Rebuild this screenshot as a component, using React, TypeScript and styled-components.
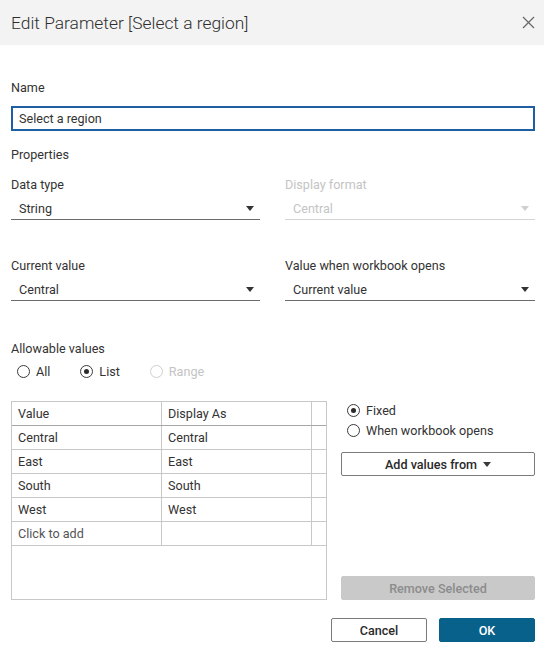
import React from "react";
import styled, { createGlobalStyle } from "styled-components";

const GlobalStyle = createGlobalStyle`
  html, body {
    margin: 0;
    padding: 0;
    background: #ffffff;
  }
  body {
    font-family: Roboto, "Liberation Sans", Arial, sans-serif;
    color: #333333;
  }
  * {
    box-sizing: border-box;
  }
`;

const Dialog = styled.div`
  width: 544px;
  height: 654px;
  display: flex;
  flex-direction: column;
  background: #ffffff;
`;

const Header = styled.div`
  height: 45px;
  flex: 0 0 45px;
  background: #f3f3f3;
  display: flex;
  align-items: center;
  justify-content: space-between;
  padding: 0 4px 0 11px;
`;

const Title = styled.h1`
  margin: 0;
  font-size: 17.4px;
  font-weight: 300;
  color: #2e2e2e;
`;

const CloseButton = styled.button`
  width: 24px;
  height: 24px;
  border: none;
  background: transparent;
  padding: 0;
  display: flex;
  align-items: center;
  justify-content: center;
  cursor: pointer;
`;

const Body = styled.div`
  flex: 1;
  display: flex;
  flex-direction: column;
  padding: 35px 9px 12px 11px;
`;

const Label = styled.div<{ $top?: number; $disabled?: boolean }>`
  font-size: 12.6px;
  line-height: 16px;
  height: 16px;
  margin-top: ${(p) => p.$top ?? 0}px;
  color: ${(p) => (p.$disabled ? "#c4c4c4" : "#333333")};
`;

const NameInput = styled.input`
  margin-top: 10px;
  height: 25px;
  width: 100%;
  border: 2px solid #1d5fa0;
  padding: 0 6px;
  font-family: inherit;
  font-size: 12.6px;
  color: #333333;
  outline: none;
`;

const Columns = styled.div<{ $top?: number }>`
  display: grid;
  grid-template-columns: 249px 250px;
  column-gap: 25px;
  margin-top: ${(p) => p.$top ?? 0}px;
`;

const Field = styled.div`
  display: flex;
  flex-direction: column;
`;

const Select = styled.div<{ $disabled?: boolean }>`
  margin-top: 4px;
  height: 23px;
  display: flex;
  align-items: center;
  justify-content: space-between;
  padding: 0 6px 0 8px;
  border-bottom: 1px solid ${(p) => (p.$disabled ? "#d4d4d4" : "#6b6b6b")};
  font-size: 12.6px;
  color: ${(p) => (p.$disabled ? "#c4c4c4" : "#333333")};
`;

const Caret = styled.span<{ $color?: string }>`
  width: 0;
  height: 0;
  border-left: 4px solid transparent;
  border-right: 4px solid transparent;
  border-top: 5px solid ${(p) => p.$color ?? "#333333"};
  display: inline-block;
`;

const RadioRow = styled.div`
  display: flex;
  align-items: center;
  gap: 30px;
  margin-top: 6px;
  padding-left: 6px;
`;

const RadioOption = styled.label<{ $disabled?: boolean }>`
  display: flex;
  align-items: center;
  gap: 6px;
  height: 16px;
  font-size: 12.6px;
  color: ${(p) => (p.$disabled ? "#c4c4c4" : "#333333")};
`;

const RadioCircle = styled.span<{ $checked?: boolean; $disabled?: boolean }>`
  width: 13px;
  height: 13px;
  border-radius: 50%;
  border: 1px solid ${(p) => (p.$disabled ? "#cfcfcf" : "#3a3a3a")};
  display: flex;
  align-items: center;
  justify-content: center;
  &::after {
    content: "";
    width: 5px;
    height: 5px;
    border-radius: 50%;
    background: #2a2a2a;
    display: ${(p) => (p.$checked ? "block" : "none")};
  }
`;

const ValuesArea = styled.div`
  display: flex;
  gap: 14px;
  margin-top: 22px;
`;

const Table = styled.div`
  width: 316px;
  height: 199px;
  border: 1px solid #c8c8c8;
  display: flex;
  flex-direction: column;
`;

const Row = styled.div<{ $header?: boolean }>`
  display: grid;
  grid-template-columns: 150px 150px 1fr;
  height: 24px;
  border-bottom: 1px solid ${(p) => (p.$header ? "#a6a6a6" : "#c8c8c8")};
`;

const Cell = styled.div<{ $muted?: boolean }>`
  border-right: 1px solid #c8c8c8;
  padding-left: 6px;
  display: flex;
  align-items: center;
  font-size: 12.6px;
  color: ${(p) => (p.$muted ? "#555555" : "#333333")};
  &:last-child {
    border-right: none;
  }
`;

const SidePanel = styled.div`
  flex: 1;
  display: flex;
  flex-direction: column;
  padding-top: 1px;
`;

const SideRadios = styled.div`
  display: flex;
  flex-direction: column;
  gap: 4px;
  padding-left: 6px;
`;

const Button = styled.button<{ $variant: "outline" | "disabled" | "primary" }>`
  height: 24px;
  border-radius: 2px;
  font-family: inherit;
  font-size: 12.6px;
  font-weight: 500;
  display: flex;
  align-items: center;
  justify-content: center;
  gap: 6px;
  cursor: pointer;
  border: 1px solid
    ${(p) =>
      p.$variant === "outline" ? "#7a7a7a" : p.$variant === "primary" ? "#08618b" : "#c9c9c9"};
  background: ${(p) =>
    p.$variant === "outline" ? "#ffffff" : p.$variant === "primary" ? "#08618b" : "#c9c9c9"};
  color: ${(p) =>
    p.$variant === "outline" ? "#2a2a2a" : p.$variant === "primary" ? "#ffffff" : "#8c8c8c"};
`;

const AddButton = styled(Button)`
  margin-top: 14px;
  width: 194px;
`;

const RemoveButton = styled(Button)`
  margin-top: auto;
  width: 194px;
`;

const Footer = styled.div`
  display: flex;
  justify-content: flex-end;
  gap: 12px;
  margin-top: 18px;
`;

const FooterButton = styled(Button)`
  width: 96px;
`;

const rows = [
  ["Central", "Central"],
  ["East", "East"],
  ["South", "South"],
  ["West", "West"],
];

const Radio: React.FC<{ label: string; checked?: boolean; disabled?: boolean }> = ({
  label,
  checked,
  disabled,
}) => (
  <RadioOption $disabled={disabled}>
    <RadioCircle $checked={checked} $disabled={disabled} />
    {label}
  </RadioOption>
);

const App: React.FC = () => {
  return (
    <>
      <GlobalStyle />
      <Dialog>
        <Header>
          <Title>Edit Parameter [Select a region]</Title>
          <CloseButton aria-label="Close">
            <svg width="13" height="13" viewBox="0 0 13 13">
              <path d="M1 1 L12 12 M12 1 L1 12" stroke="#6a6a6a" strokeWidth="1.3" fill="none" />
            </svg>
          </CloseButton>
        </Header>
        <Body>
          <Label>Name</Label>
          <NameInput defaultValue="Select a region" />
          <Label $top={16}>Properties</Label>

          <Columns $top={14}>
            <Field>
              <Label>Data type</Label>
              <Select>
                String
                <Caret />
              </Select>
            </Field>
            <Field>
              <Label $disabled>Display format</Label>
              <Select $disabled>
                Central
                <Caret $color="#cfcfcf" />
              </Select>
            </Field>
          </Columns>

          <Columns $top={38}>
            <Field>
              <Label>Current value</Label>
              <Select>
                Central
                <Caret />
              </Select>
            </Field>
            <Field>
              <Label>Value when workbook opens</Label>
              <Select>
                Current value
                <Caret />
              </Select>
            </Field>
          </Columns>

          <Label $top={40}>Allowable values</Label>
          <RadioRow>
            <Radio label="All" />
            <Radio label="List" checked />
            <Radio label="Range" disabled />
          </RadioRow>

          <ValuesArea>
            <Table>
              <Row $header>
                <Cell>Value</Cell>
                <Cell>Display As</Cell>
                <Cell />
              </Row>
              {rows.map(([value, display]) => (
                <Row key={value}>
                  <Cell>{value}</Cell>
                  <Cell>{display}</Cell>
                  <Cell />
                </Row>
              ))}
              <Row>
                <Cell $muted>Click to add</Cell>
                <Cell />
                <Cell />
              </Row>
            </Table>
            <SidePanel>
              <SideRadios>
                <Radio label="Fixed" checked />
                <Radio label="When workbook opens" />
              </SideRadios>
              <AddButton $variant="outline">
                Add values from
                <Caret $color="#3a3a3a" />
              </AddButton>
              <RemoveButton $variant="disabled">Remove Selected</RemoveButton>
            </SidePanel>
          </ValuesArea>

          <Footer>
            <FooterButton $variant="outline">Cancel</FooterButton>
            <FooterButton $variant="primary">OK</FooterButton>
          </Footer>
        </Body>
      </Dialog>
    </>
  );
};

export default App;
